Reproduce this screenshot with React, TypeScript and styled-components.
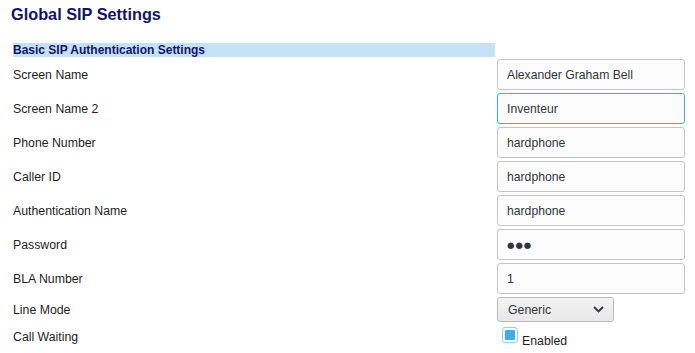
import { createGlobalStyle } from "styled-components";
import styled from "styled-components";

const GlobalStyle = createGlobalStyle`
  html, body {
    margin: 0;
    padding: 0;
    background: #ffffff;
  }
  body {
    font-family: "Liberation Sans", Arial, sans-serif;
    color: #1e1e1e;
  }
`;

const Page = styled.div`
  padding: 4px 0 0 0;
`;

const Title = styled.h1`
  margin: 0 0 0 11px;
  font-size: 16.3px;
  line-height: 20px;
  font-weight: bold;
  color: #141467;
`;

const Form = styled.div`
  display: grid;
  grid-template-columns: 482px 188px;
  column-gap: 2px;
  row-gap: 3px;
  margin: 19px 0 0 13px;
  align-items: center;
`;

const SectionHeader = styled.div`
  height: 14px;
  margin-bottom: -1px;
  background: #c5e1f8;
  color: #141467;
  font-size: 12px;
  font-weight: bold;
  line-height: 14px;
`;

const Label = styled.div<{ $offset?: number }>`
  font-size: 12.3px;
  color: #1e1e1e;
  line-height: 15px;
  margin-top: ${(p) => p.$offset ?? 2}px;
`;

const TextInput = styled.input<{ $focused?: boolean; $dots?: boolean }>`
  box-sizing: border-box;
  width: 188px;
  height: 31px;
  margin: 0;
  padding: 0 9px;
  border: 1px solid ${(p) => (p.$focused ? "#3daee9" : "#c4c5c6")};
  border-radius: 3px;
  background: #fcfcfc;
  font-family: ${(p) =>
    p.$dots ? '"DejaVu Sans", sans-serif' : '"Liberation Sans", Arial, sans-serif'};
  font-size: ${(p) => (p.$dots ? "8.5px" : "12.2px")};
  letter-spacing: ${(p) => (p.$dots ? "1px" : "0")};
  color: #31363b;
  outline: none;
  caret-color: #31363b;
`;

const SelectBox = styled.div`
  box-sizing: border-box;
  width: 117px;
  height: 25px;
  display: flex;
  align-items: center;
  justify-content: space-between;
  padding: 0 9px 0 10px;
  border: 1px solid #b9babb;
  border-radius: 3px;
  background: linear-gradient(#f3f3f3, #e8e8e8);
  font-size: 12.3px;
  color: #31363b;
`;

const CheckRow = styled.div`
  display: flex;
  align-items: flex-end;
  height: 24px;
  padding-left: 5px;
`;

const CheckBox = styled.span`
  box-sizing: border-box;
  width: 16px;
  height: 16px;
  margin-bottom: 6px;
  border: 1px solid #93cfee;
  border-radius: 3px;
  background: #ffffff;
  padding: 2px;
  display: flex;
  &::after {
    content: "";
    flex: 1;
    background: #3daee9;
    border-radius: 1px;
  }
`;

const CheckText = styled.span`
  margin-left: 4px;
  font-size: 12.3px;
  line-height: 15px;
  color: #1e1e1e;
`;

const Chevron = () => (
  <svg width="11" height="7" viewBox="0 0 11 7">
    <path d="M1 1l4.5 4.5L10 1" fill="none" stroke="#31363b" strokeWidth="1.8" />
  </svg>
);

const fields = [
  { label: "Screen Name", value: "Alexander Graham Bell" },
  { label: "Screen Name 2", value: "Inventeur", focused: true },
  { label: "Phone Number", value: "hardphone" },
  { label: "Caller ID", value: "hardphone" },
  { label: "Authentication Name", value: "hardphone" },
  { label: "Password", value: "●●●", dots: true },
  { label: "BLA Number", value: "1" },
];

export default function App() {
  return (
    <Page>
      <GlobalStyle />
      <Title>Global SIP Settings</Title>
      <Form>
        <SectionHeader>Basic SIP Authentication Settings</SectionHeader>
        <div />
        {fields.map((f) => (
          <>
            <Label key={f.label + "-l"}>{f.label}</Label>
            <TextInput
              key={f.label + "-i"}
              type="text"
              defaultValue={f.value}
              $focused={f.focused}
              $dots={f.dots}
              readOnly
            />
          </>
        ))}
        <Label>Line Mode</Label>
        <SelectBox>
          <span>Generic</span>
          <Chevron />
        </SelectBox>
        <Label $offset={1}>Call Waiting</Label>
        <CheckRow>
          <CheckBox />
          <CheckText>Enabled</CheckText>
        </CheckRow>
      </Form>
    </Page>
  );
}
